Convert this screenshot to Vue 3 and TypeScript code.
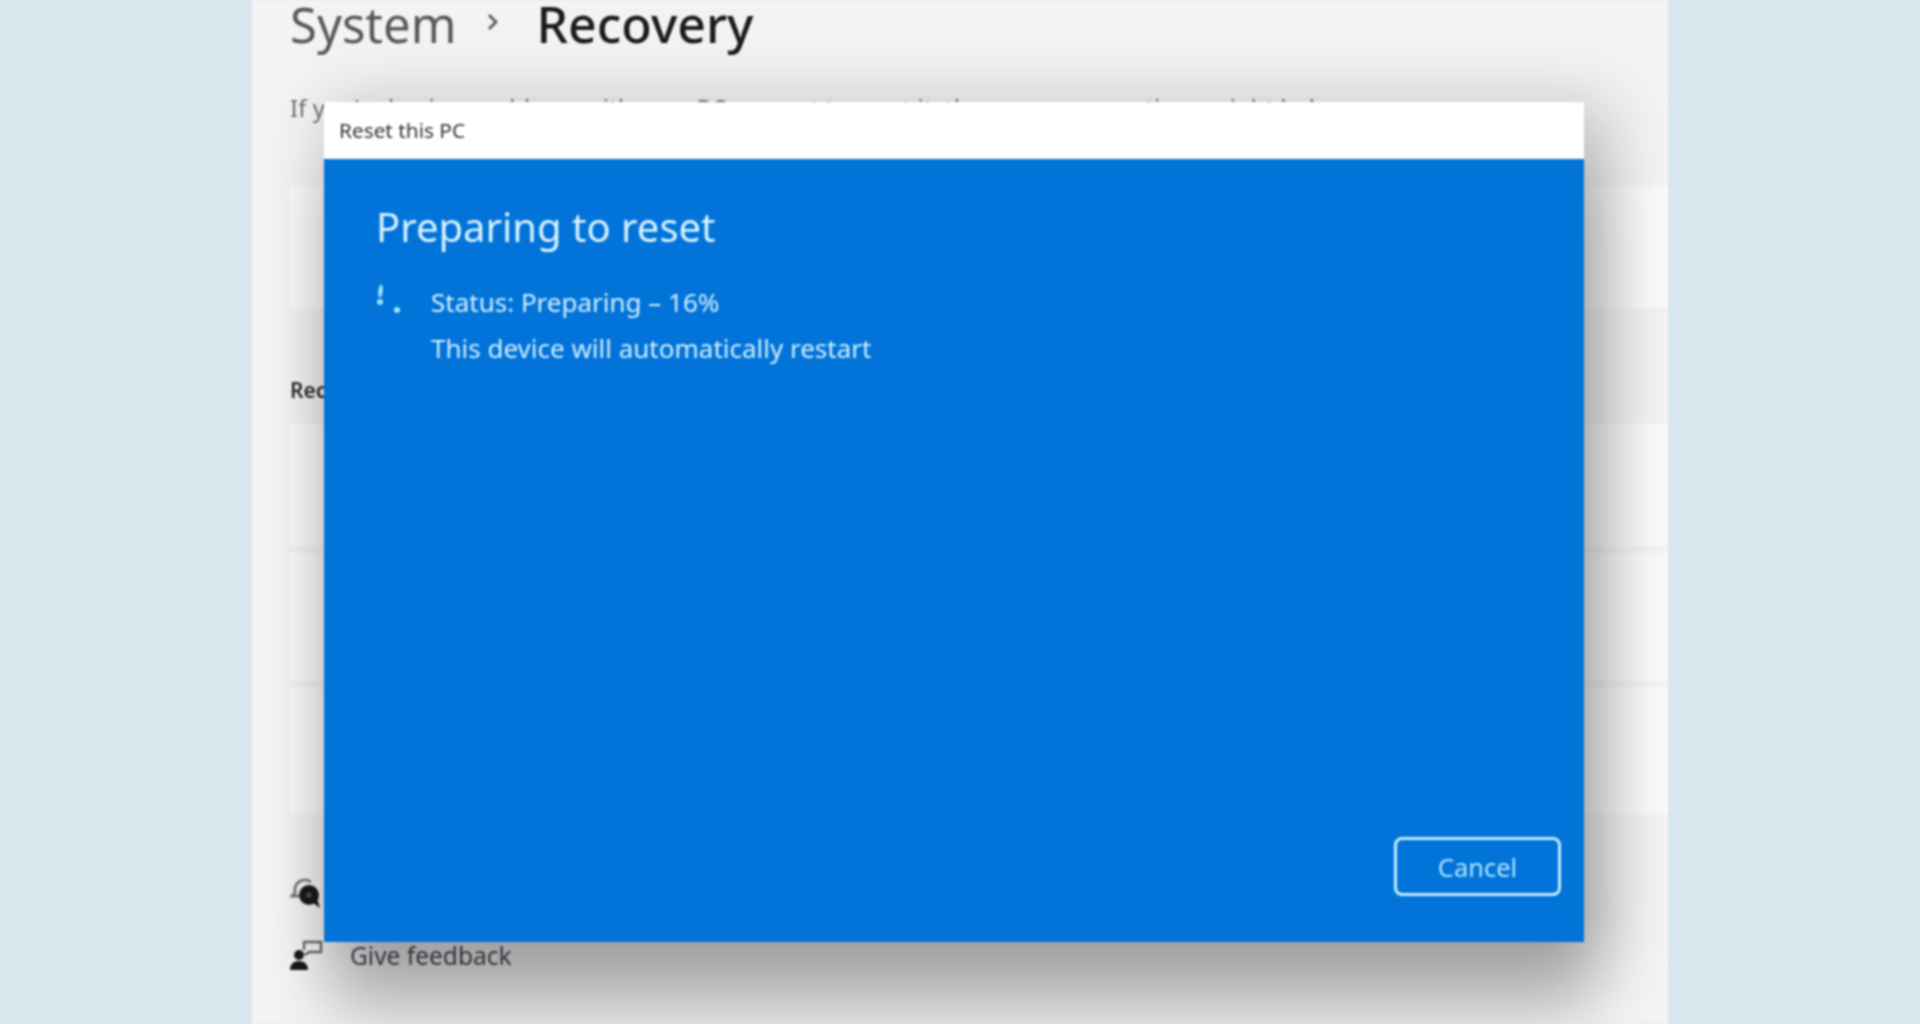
<script setup lang="ts">
const cards: { id: string; height: number }[] = [
  { id: 'reset', height: 122 },
  { id: 'advanced', height: 128 },
  { id: 'fix', height: 126 },
]
</script>

<template>
  <div class="stage">
    <main class="panel">
      <h1 class="crumbs">
        <span class="parent">System</span>
        <svg class="chev" width="16" height="22" viewBox="0 0 16 22"><path d="M4 4l7 7-7 7" fill="none" stroke="#5a5a5a" stroke-width="2.8" /></svg>
        <span class="current">Recovery</span>
      </h1>
      <p class="intro">If you're having problems with your PC or want to reset it, these recovery options might help.</p>
      <div class="card card-top"></div>
      <h2 class="label">Recovery options</h2>
      <div class="stack">
        <div v-for="c in cards" :key="c.id" class="card" :style="{ height: c.height + 'px' }"></div>
      </div>
      <div class="link link-help">
        <svg width="34" height="34" viewBox="0 0 34 34">
          <path d="M21 6a10 10 0 0 0-16 9v2l-3 3h7" fill="none" stroke="#77777a" stroke-width="2.8" />
          <circle cx="19" cy="19" r="10" fill="#1a1a1c" />
          <path d="M22 26l8 6-3-10z" fill="#1a1a1c" />
          <circle cx="19" cy="19" r="2.5" fill="#55555a" />
        </svg>
        <span>Get help</span>
      </div>
      <div class="link">
        <svg width="34" height="34" viewBox="0 0 34 34">
          <circle cx="9" cy="17" r="5" fill="#1a1a1c" />
          <path d="M0 32c0-6 4-9 9-9s9 3 9 9z" fill="#1a1a1c" />
          <path d="M14 12V4h17v10H19l-4 3" fill="none" stroke="#66666a" stroke-width="2.4" />
        </svg>
        <span>Give feedback</span>
      </div>

      <section class="dialog">
        <header class="titlebar">Reset this PC</header>
        <div class="body">
          <h3 class="heading">Preparing to reset</h3>
          <div class="status">
            <svg class="spinner" width="26" height="30" viewBox="0 0 26 30">
              <ellipse cx="5.5" cy="6" rx="2.2" ry="6.5" fill="#9fe3ff" transform="rotate(6 5.5 6)" />
              <circle cx="5" cy="17" r="3" fill="#9fe3ff" />
              <circle cx="22" cy="25" r="3" fill="#a8e8ff" />
            </svg>
            <div class="lines">
              <p>Status: Preparing – 16%</p>
              <p>This device will automatically restart</p>
            </div>
          </div>
          <div class="actions">
            <button class="cancel" type="button">Cancel</button>
          </div>
        </div>
      </section>
    </main>
  </div>
</template>

<style>
html, body { margin: 0; background: #d8e6ed; }
</style>

<style scoped>
.stage {
  width: 1920px;
  height: 1024px;
  background: #d8e6ed;
  overflow: hidden;
  font-family: "Noto Sans", "Open Sans", sans-serif;
  filter: blur(0.9px);
}
.panel {
  position: relative;
  margin-left: 252px;
  width: 1416px;
  height: 1024px;
  box-sizing: border-box;
  padding-left: 38px;
  background: #f5f2f4;
  overflow: hidden;
}
.crumbs {
  display: flex;
  align-items: center;
  height: 48px;
  margin: 0;
  font-size: 50px;
  line-height: 48px;
  font-weight: 400;
}
.parent { color: #58585a; font-size: 49px; }
.chev { margin: 0 36px 4px 28px; }
.current { color: #1b1b1b; font-weight: 500; }
.intro {
  margin: 46px 0 64px;
  font-size: 24px;
  line-height: 28px;
  color: #6e6e70;
  white-space: nowrap;
}
.card {
  margin-right: -40px;
  background: #fbf9fb;
  box-sizing: border-box;
}
.card-top { height: 122px; }
.label {
  margin: 68px 0 20px;
  font-size: 21px;
  line-height: 28px;
  font-weight: 600;
  color: #2c2c2e;
}
.stack { display: flex; flex-direction: column; gap: 7px; }
.link {
  display: flex;
  align-items: center;
  gap: 26px;
  height: 34px;
  margin-top: 28px;
  font-size: 24.5px;
  color: #454d5a;
}
.link-help { margin-top: 62px; }
.dialog {
  position: absolute;
  left: 72px;
  top: 102px;
  width: 1260px;
  height: 840px;
  display: flex;
  flex-direction: column;
  box-shadow: 16px 10px 60px 10px rgba(0, 0, 0, 0.2), 8px 74px 60px 0 rgba(0, 0, 0, 0.22);
}
.titlebar {
  flex: 0 0 57px;
  box-sizing: border-box;
  padding-left: 15px;
  background: #fff;
  color: #333;
  font-size: 20.8px;
  line-height: 56px;
}
.body {
  flex: 1;
  display: flex;
  flex-direction: column;
  padding: 0 23px 46px 52px;
  background: #0173d9;
  color: #d4f0ff;
}
.heading {
  margin: 40px 0 24px;
  font-size: 40px;
  line-height: 56px;
  font-weight: 400;
  color: #d9f3ff;
}
.status { display: flex; }
.spinner { flex: 0 0 26px; margin: 6px 30px 0 -1px; }
.lines p {
  margin: 0;
  font-size: 26px;
  line-height: 46px;
}
.actions { margin-top: auto; display: flex; justify-content: flex-end; }
.cancel {
  width: 167px;
  height: 59px;
  box-sizing: border-box;
  border: 3px solid #c2eeff;
  border-radius: 8px;
  background: transparent;
  color: #b0e6ff;
  font: inherit;
  font-size: 25.5px;
}
</style>
